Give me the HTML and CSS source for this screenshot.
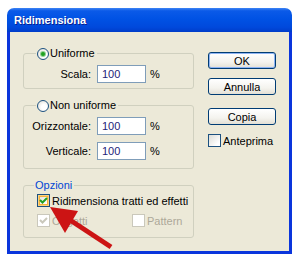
FILE: index.html
```html
<!DOCTYPE html>
<html lang="it">
<head>
    <meta charset="UTF-8">
    <title>Ridimensiona</title>
    <link rel="stylesheet" href="styles.css">
</head>
<body>
    <div class="window">
        <div class="titlebar"><span class="title">Ridimensiona</span></div>
        <div class="client">
            <div class="left">
                <fieldset class="group group-uniform">
                    <legend><span class="radio checked"></span>Uniforme</legend>
                    <div class="row">
                        <span class="lbl">Scala:</span>
                        <input type="text" class="field" value="100" readonly>
                        <span class="unit">%</span>
                    </div>
                </fieldset>
                <fieldset class="group group-free">
                    <legend><span class="radio"></span>Non uniforme</legend>
                    <div class="row">
                        <span class="lbl">Orizzontale:</span>
                        <input type="text" class="field" value="100" readonly>
                        <span class="unit">%</span>
                    </div>
                    <div class="row">
                        <span class="lbl">Verticale:</span>
                        <input type="text" class="field" value="100" readonly>
                        <span class="unit">%</span>
                    </div>
                </fieldset>
                <fieldset class="group group-options">
                    <legend class="caption">Opzioni</legend>
                    <div class="check-row">
                        <span class="check hot">
                            <svg viewBox="0 0 11 11"><path d="M2 5 L4.5 7.5 L9 3"/></svg>
                        </span>
                        <span>Ridimensiona tratti ed effetti</span>
                    </div>
                    <div class="check-row disabled">
                        <span class="opt opt-first">
                            <span class="check">
                                <svg viewBox="0 0 11 11"><path d="M2 5 L4.5 7.5 L9 3"/></svg>
                            </span>
                            <span>Oggetti</span>
                        </span>
                        <span class="opt">
                            <span class="check"></span>
                            <span>Pattern</span>
                        </span>
                    </div>
                </fieldset>
            </div>
            <div class="right">
                <button class="btn default">OK</button>
                <button class="btn">Annulla</button>
                <button class="btn btn-copy">Copia</button>
                <div class="preview"><span class="check"></span><span>Anteprima</span></div>
            </div>
        </div>
        <svg class="arrow" viewBox="0 0 70 50" width="70" height="50">
            <line x1="23" y1="16" x2="64" y2="43"/>
            <polygon points="3,3 31,7 18,29"/>
        </svg>
    </div>
</body>
</html>
```

FILE: styles.css
```css
body {
    margin: 0;
    padding: 8px 0 0 7px;
    background: #ffffff;
    font-family: "Liberation Sans", Arial, sans-serif;
    font-size: 11px;
    color: #000;
}
.window {
    position: relative;
    width: 285px;
}
.titlebar {
    height: 24px;
    border-radius: 7px 7px 0 0;
    background: linear-gradient(to bottom, #3d84f5 0%, #0b5ae8 12%, #0052e4 45%, #0049dc 80%, #003cc9 100%);
    display: flex;
    align-items: center;
    padding-left: 7px;
}
.title {
    color: #fff;
    font-weight: bold;
    font-size: 11px;
    text-shadow: 1px 1px 0 #0a1f8f;
}
.client {
    display: flex;
    height: 219px;
    background: #ece9d8;
    border: 3px solid #0a35dc;
    border-top: 0;
    padding: 0 13px;
}
.left {
    width: 171px;
    padding-top: 15px;
}
.group {
    margin: 0;
    border: 1px solid #d0d0bf;
    border-radius: 3px;
    padding: 5px 8px 5px 7px;
    min-inline-size: 0;
}
.group + .group {
    margin-top: 10px;
}
.group legend {
    margin-left: 5px;
    padding: 0 2px 0 1px;
    height: 13px;
    line-height: 13px;
    display: flex;
    align-items: center;
}
.group-free {
    padding-bottom: 8px;
}
.group-options {
    padding-top: 2px;
    padding-bottom: 10px;
}
.group legend.caption {
    color: #0046d5;
    margin-left: 3px;
    padding: 0 2px 0 1px;
}
.radio {
    width: 12px;
    height: 12px;
    box-sizing: border-box;
    border: 1px solid #1c5180;
    border-radius: 50%;
    background: radial-gradient(circle at 60% 60%, #ffffff 30%, #dcdad0 100%);
    margin-right: 1px;
    display: flex;
    align-items: center;
    justify-content: center;
}
.radio.checked::after {
    content: "";
    width: 4px;
    height: 4px;
    border-radius: 50%;
    background: #21a121;
    box-shadow: 0 0 0 1px #8fd08f;
}
.row {
    display: flex;
    align-items: center;
    height: 18px;
}
.row + .row {
    margin-top: 7px;
}
.lbl {
    width: 60px;
    display: flex;
    justify-content: flex-end;
    white-space: nowrap;
}
.field {
    width: 49px;
    height: 18px;
    box-sizing: border-box;
    margin: 0 0 0 6px;
    border: 1px solid #7f9db9;
    background: #fff;
    padding: 0 4px;
    font: inherit;
    color: #241c78;
    outline: none;
}
.unit {
    margin-left: 4px;
}
.check-row {
    display: flex;
    align-items: center;
    height: 13px;
    padding-left: 6px;
    white-space: nowrap;
}
.check-row + .check-row {
    margin-top: 7px;
}
.opt {
    display: flex;
    align-items: center;
}
.opt-first {
    width: 95px;
}
.check {
    width: 13px;
    height: 13px;
    box-sizing: border-box;
    border: 1px solid #1c5180;
    background: linear-gradient(135deg, #dcdcd7 0%, #ffffff 80%);
    margin-right: 2px;
    display: flex;
    align-items: center;
    justify-content: center;
    flex: none;
}
.check svg {
    width: 11px;
    height: 11px;
}
.check path {
    fill: none;
    stroke: #21a121;
    stroke-width: 2;
}
.check.hot {
    box-shadow: inset 0 0 0 1px #fbd281, inset 0 0 0 2px #f8b33a;
}
.disabled {
    color: #aca899;
}
.disabled .check {
    border-color: #cac8bb;
    background: #fff;
}
.disabled .check path {
    stroke: #cac8bb;
}
.right {
    width: 68px;
    margin-left: 14px;
    padding-top: 20px;
    display: flex;
    flex-direction: column;
}
.btn {
    height: 17px;
    margin: 0 0 9px;
    padding: 0;
    border: 1px solid #003c74;
    border-radius: 3px;
    background: linear-gradient(to bottom, #ffffff 0%, #f4f3ee 60%, #e3e0d5 100%);
    font: inherit;
    color: #000;
}
.btn.default {
    box-shadow: inset 0 0 0 1px #8eb4f3;
}
.btn-copy {
    margin-top: 4px;
}
.preview {
    display: flex;
    align-items: center;
    height: 13px;
}
.arrow {
    position: absolute;
    left: 40px;
    top: 196px;
}
.arrow line {
    stroke: #cc1414;
    stroke-width: 5;
}
.arrow polygon {
    fill: #cc1414;
}
```
